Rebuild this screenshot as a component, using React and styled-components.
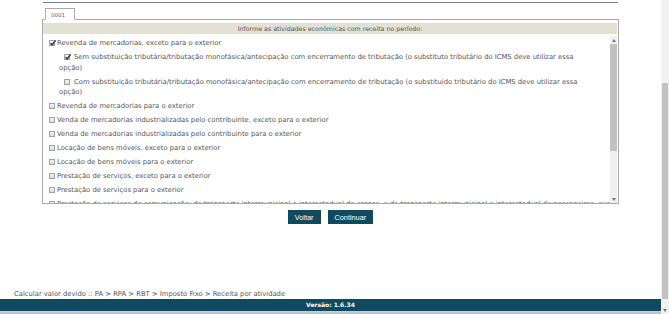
import styled, { createGlobalStyle } from "styled-components";

const GlobalStyle = createGlobalStyle`
  html, body {
    margin: 0;
    padding: 0;
    background: #fff;
    overflow: hidden;
  }
  body {
    font-family: "DejaVu Sans", Verdana, sans-serif;
    color: #555;
  }
`;

const Page = styled.div`
  display: flex;
  height: 314px;
  width: 669px;
`;

const Main = styled.div`
  flex: 1;
  display: flex;
  flex-direction: column;
  min-width: 0;
`;

const Content = styled.div`
  width: 577px;
  margin: 0 auto;
`;

const TopRule = styled.div`
  margin: 2px 1px 0 1px;
  border-top: 1px solid #7d7d7d;
`;

const Tabs = styled.div`
  display: flex;
  padding-left: 3px;
  margin-top: 5px;
`;

const Tab = styled.div`
  position: relative;
  z-index: 1;
  width: 30px;
  height: 12px;
  margin-bottom: -1px;
  border: 1px solid #a9a9a9;
  border-bottom: 1px solid #fff;
  background: #fff;
  font-size: 5.5px;
  line-height: 12px;
  padding-left: 5px;
  box-sizing: border-box;
  color: #666;
`;

const Panel = styled.div`
  border: 1px solid #a9a9a9;
  padding: 3px 1px 0 0;
`;

const PanelHeader = styled.div`
  height: 11px;
  background: #e3e0d4;
  font-size: 6.3px;
  line-height: 11px;
  text-align: center;
  color: #555;
`;

const ListWrap = styled.div`
  display: flex;
  height: 169px;
`;

const List = styled.div`
  flex: 1;
  overflow: hidden;
  padding: 4px 0 0 6px;
`;

const Item = styled.div`
  font-size: 6.8px;
  line-height: 10.5px;
  margin-bottom: 3.5px;
  padding-left: ${(p) => (p.$sub ? "10px" : "0")};
  text-indent: ${(p) => (p.$sub ? "5px" : "0")};
  white-space: ${(p) => (p.$sub ? "normal" : "nowrap")};
  padding-right: 28px;
`;

const Box = styled.span`
  display: inline-block;
  width: 6px;
  height: 6px;
  box-sizing: border-box;
  border: 1px solid #a2a2a2;
  background: linear-gradient(#f4f4f4, #dcdcdc);
  vertical-align: -1px;
  margin-right: ${(p) => (p.$sub ? "4px" : "2px")};
  text-indent: 0;
  position: relative;

  svg {
    position: absolute;
    left: -1px;
    top: -2px;
  }
`;

const InnerScroll = styled.div`
  width: 7px;
  margin-top: 2px;
  display: flex;
  flex-direction: column;
  background: #f0f0f0;
`;

const Arrow = styled.div`
  height: 8px;
  display: flex;
  align-items: center;
  justify-content: center;
`;

const Thumb = styled.div`
  height: ${(p) => p.$h}px;
  margin: ${(p) => (p.$page ? "0 1px" : "0")};
  background: #c1c1c1;
`;

const Fill = styled.div`
  flex: ${(p) => (p.$lead ? `0 0 ${p.$lead}px` : "1")};
`;

const Actions = styled.div`
  display: flex;
  justify-content: center;
  gap: 7px;
  margin-top: 6px;
`;

const Button = styled.button`
  display: flex;
  align-items: center;
  height: 14px;
  padding: 0 7px;
  margin: 0;
  border: none;
  background: #114a5e;
  color: #fff;
  font-family: "Liberation Sans", Arial, sans-serif;
  font-size: 7.3px;
  line-height: 9px;
`;

const Spacer = styled.div`
  flex: 1;
`;

const Breadcrumb = styled.div`
  padding-left: 14px;
  font-size: 6.8px;
  line-height: 9px;
  color: #555;
`;

const VersionBar = styled.div`
  height: 12px;
  background: #0f4a5e;
  color: #fff;
  font-size: 6px;
  font-weight: bold;
  line-height: 12px;
  text-align: center;
`;

const Strip = styled.div`
  height: 3px;
  background: linear-gradient(#c9d3dd, #aeb9c4);
`;

const PageScroll = styled.div`
  width: 8px;
  display: flex;
  flex-direction: column;
  background: #f1f1f1;
`;

function Check({ checked, sub }) {
  return (
    <Box $sub={sub}>
      {checked && (
        <svg width="8" height="8" viewBox="0 0 8 8">
          <path d="M1.6 4.2 L3.2 6 L6.6 1.4" fill="none" stroke="#333" strokeWidth="1.4" />
        </svg>
      )}
    </Box>
  );
}

function Tri({ down }) {
  return (
    <svg width="4" height="3" viewBox="0 0 4 3">
      <path d={down ? "M0 0 L4 0 L2 3 Z" : "M0 3 L4 3 L2 0 Z"} fill="#777" />
    </svg>
  );
}

const items = [
  { text: "Revenda de mercadorias, exceto para o exterior", checked: true },
  {
    text: "Sem substituição tributária/tributação monofásica/antecipação com encerramento de tributação (o substituto tributário do ICMS deve utilizar essa opção)",
    checked: true,
    sub: true,
  },
  {
    text: "Com substituição tributária/tributação monofásica/antecipação com encerramento de tributação (o substituído tributário do ICMS deve utilizar essa opção)",
    sub: true,
  },
  { text: "Revenda de mercadorias para o exterior" },
  { text: "Venda de mercadorias industrializadas pelo contribuinte, exceto para o exterior" },
  { text: "Venda de mercadorias industrializadas pelo contribuinte para o exterior" },
  { text: "Locação de bens móveis, exceto para o exterior" },
  { text: "Locação de bens móveis para o exterior" },
  { text: "Prestação de serviços, exceto para o exterior" },
  { text: "Prestação de serviços para o exterior" },
  {
    text: "Prestação de serviços de comunicação; de transporte intermunicipal e interestadual de cargas, e de transporte intermunicipal e interestadual de passageiros, exceto para o exterior",
  },
];

export default function App() {
  return (
    <>
      <GlobalStyle />
      <Page>
        <Main>
          <Content>
            <TopRule />
            <Tabs>
              <Tab>0001</Tab>
            </Tabs>
            <Panel>
              <PanelHeader>Informe as atividades econômicas com receita no período:</PanelHeader>
              <ListWrap>
                <List>
                  {items.map((it, i) => (
                    <Item key={i} $sub={it.sub}>
                      <Check checked={it.checked} sub={it.sub} />
                      {it.text}
                    </Item>
                  ))}
                </List>
                <InnerScroll>
                  <Arrow>
                    <Tri />
                  </Arrow>
                  <Thumb $h={107} />
                  <Fill />
                  <Arrow>
                    <Tri down />
                  </Arrow>
                </InnerScroll>
              </ListWrap>
            </Panel>
            <Actions>
              <Button>Voltar</Button>
              <Button>Continuar</Button>
            </Actions>
          </Content>
          <Spacer />
          <Breadcrumb>Calcular valor devido :: PA &gt; RPA &gt; RBT &gt; Imposto Fixo &gt; Receita por atividade</Breadcrumb>
          <VersionBar>Versão: 1.6.34</VersionBar>
          <Strip />
        </Main>
        <PageScroll>
          <Fill $lead={83} />
          <Thumb $h={216} $page />
          <Fill />
          <Arrow>
            <Tri down />
          </Arrow>
        </PageScroll>
      </Page>
    </>
  );
}
